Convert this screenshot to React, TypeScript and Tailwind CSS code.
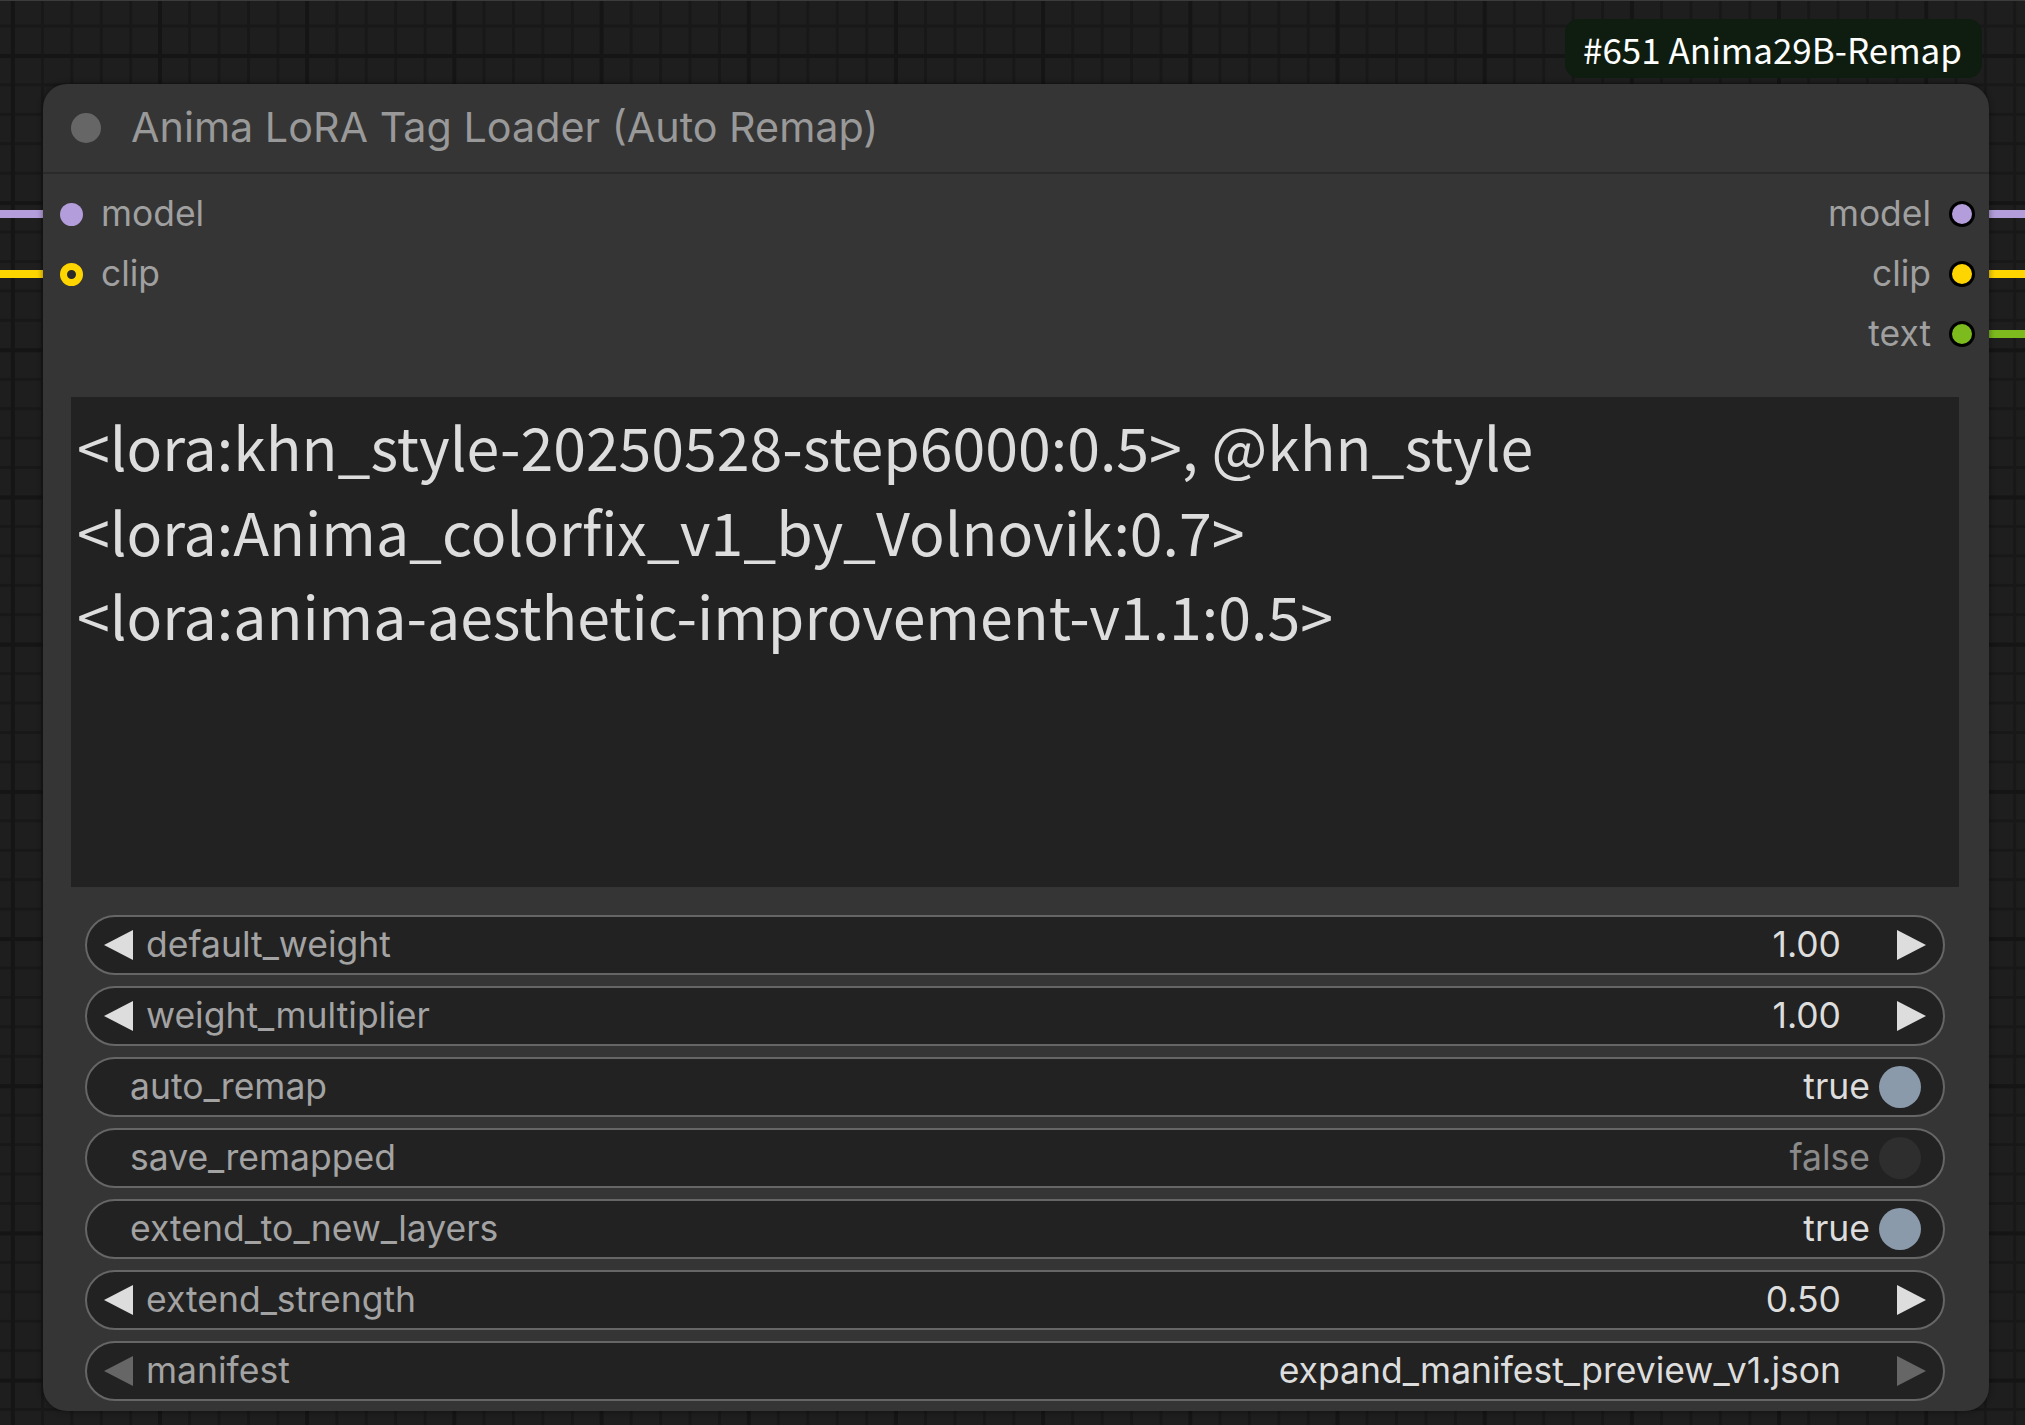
import React from "react";

/**
 * ComfyUI-style node: Anima LoRA Tag Loader (Auto Remap)
 * Canvas scale ~3x, so everything is big.
 */

type Widget =
  | { kind: "number"; name: string; value: string }
  | { kind: "toggle"; name: string; on: boolean }
  | { kind: "combo"; name: string; value: string; disabled?: boolean };

const WIDGETS: Widget[] = [
  { kind: "number", name: "default_weight", value: "1.00" },
  { kind: "number", name: "weight_multiplier", value: "1.00" },
  { kind: "toggle", name: "auto_remap", on: true },
  { kind: "toggle", name: "save_remapped", on: false },
  { kind: "toggle", name: "extend_to_new_layers", on: true },
  { kind: "number", name: "extend_strength", value: "0.50" },
  { kind: "combo", name: "manifest", value: "expand_manifest_preview_v1.json", disabled: true },
];

const PROMPT_LINES = [
  "<lora:khn_style-20250528-step6000:0.5>, @khn_style",
  "<lora:Anima_colorfix_v1_by_Volnovik:0.7>",
  "<lora:anima-aesthetic-improvement-v1.1:0.5>",
];

const INTER = "font-['Inter','Noto_Sans',sans-serif]";

function Arrow({ dir, dim }: { dir: "left" | "right"; dim?: boolean }) {
  return (
    <svg width="29" height="30" viewBox="0 0 29 30" className="shrink-0">
      <polygon
        points={dir === "left" ? "29,0 29,30 0,15" : "0,0 0,30 29,15"}
        fill={dim ? "#666666" : "#dddddd"}
      />
    </svg>
  );
}

function WidgetRow({ w }: { w: Widget }) {
  const base =
    "h-[60px] rounded-full border-2 border-[#666666] bg-[#222222] flex items-center text-[35.5px] leading-none " + INTER;

  if (w.kind === "toggle") {
    return (
      <div className={base + " pl-[43px] pr-[22px]"}>
        <span className="text-[#a3a3a3]">{w.name}</span>
        <span className={"ml-auto " + (w.on ? "text-[#dddddd]" : "text-[#8a8a8a]")}>{w.on ? "true" : "false"}</span>
        <span
          className={
            "ml-[9px] w-[42px] h-[42px] rounded-full " + (w.on ? "bg-[#8a9aab]" : "bg-[#2e2e2e]")
          }
        />
      </div>
    );
  }

  const dim = w.kind === "combo" && w.disabled;
  return (
    <div className={base + " pl-[17px] pr-[17px]"}>
      <Arrow dir="left" dim={dim} />
      <span className="ml-[13px] text-[#a3a3a3]">{w.name}</span>
      <span className="ml-auto text-[#dddddd]">{w.value}</span>
      <span className="ml-[56px]">
        <Arrow dir="right" dim={dim} />
      </span>
    </div>
  );
}

export default function App() {
  return (
    <div
      className="relative w-[2025px] h-[1425px] overflow-hidden border-t border-[#3c3c3c] bg-[#1e1e1e] bg-[image:linear-gradient(to_right,#151515_4px,transparent_4px),linear-gradient(to_bottom,#151515_4px,transparent_4px),linear-gradient(to_right,#181818_3px,transparent_3px),linear-gradient(to_bottom,#181818_3px,transparent_3px)] bg-[size:147.2px_147.2px,147.2px_147.2px,29.44px_29.44px,29.44px_29.44px] bg-[position:158px_53px,158px_53px,11.5px_23.5px,11.5px_23.5px]"
    >
      {/* links going into / out of the node */}
      <div className="absolute left-0 top-[209px] w-[50px] h-[8px] bg-[#b39ddb]" />
      <div className="absolute left-0 top-[269px] w-[50px] h-[8px] bg-[#ffd500]" />
      <div className="absolute left-[1980px] top-[209px] w-[45px] h-[8px] bg-[#b39ddb]" />
      <div className="absolute left-[1980px] top-[269px] w-[45px] h-[8px] bg-[#ffd500]" />
      <div className="absolute left-[1980px] top-[329px] w-[45px] h-[8px] bg-[#7dba1e]" />

      {/* node id badge */}
      <div className="absolute left-[1565px] top-[18px] h-[59px] w-[417px] rounded-[14px] bg-[#0e1d0f] flex items-center pl-[18px] whitespace-nowrap text-white text-[35px] leading-none font-['Noto_Sans_CJK_JP','Source_Sans_3',sans-serif]">
        #651 Anima29B-Remap
      </div>

      {/* node */}
      <div className="absolute left-[43px] top-[83px] w-[1946px] h-[1327px] rounded-[24px] bg-[#353535] shadow-[0_0_6px_rgba(0,0,0,0.45)] flex flex-col">
        <div className="h-[90px] shrink-0 flex items-center pl-[28px] border-b-2 border-[#2a2a2a]">
          <span className="w-[30px] h-[30px] rounded-full bg-[#666666]" />
          <span className={"ml-[30px] text-[41.3px] leading-none text-[#999999] " + INTER}>
            Anima LoRA Tag Loader (Auto Remap)
          </span>
        </div>

        {/* slots */}
        <div className={"pt-[10px] flex justify-between text-[35.4px] leading-none text-[#a0a0a0] " + INTER}>
          <div className="flex flex-col">
            <div className="h-[60px] flex items-center pl-[17px]">
              <span className="w-[23px] h-[23px] rounded-full bg-[#b39ddb]" />
              <span className="ml-[18px]">model</span>
            </div>
            <div className="h-[60px] flex items-center pl-[17px]">
              <span className="w-[23px] h-[23px] rounded-full border-[7px] border-[#ffd500] bg-[#2a2a2a]" />
              <span className="ml-[18px]">clip</span>
            </div>
          </div>
          <div className="flex flex-col items-end">
            {[
              ["model", "bg-[#b39ddb]"],
              ["clip", "bg-[#ffd500]"],
              ["text", "bg-[#7dba1e]"],
            ].map(([label, color]) => (
              <div key={label} className="h-[60px] flex items-center pr-[14px]">
                <span>{label}</span>
                <span className={"ml-[18px] w-[26px] h-[26px] rounded-full border-[3px] border-black " + color} />
              </div>
            ))}
          </div>
        </div>

        {/* prompt textarea */}
        <div className="mt-[33px] ml-[28px] w-[1888px] h-[490px] shrink-0 bg-[#222222] pl-[6px] pt-[7px] text-[59px] leading-[84.5px] text-[#dddddd] font-['Noto_Sans_CJK_JP','Noto_Sans',sans-serif]">
          {PROMPT_LINES.map((line) => (
            <div key={line} className="whitespace-pre">
              {line}
            </div>
          ))}
        </div>

        {/* widgets */}
        <div className="mt-[28px] ml-[42px] w-[1860px] flex flex-col gap-[11px]">
          {WIDGETS.map((w) => (
            <WidgetRow key={w.name} w={w} />
          ))}
        </div>
      </div>
    </div>
  );
}
